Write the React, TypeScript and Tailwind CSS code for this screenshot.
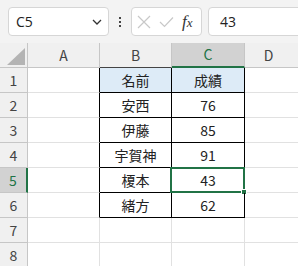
import React from 'react';

const rows = [
  { n: 1, b: '名前', c: '成績', head: true },
  { n: 2, b: '安西', c: '76' },
  { n: 3, b: '伊藤', c: '85' },
  { n: 4, b: '宇賀神', c: '91' },
  { n: 5, b: '榎本', c: '43' },
  { n: 6, b: '緒方', c: '62' },
  { n: 7, b: '', c: '' },
  { n: 8, b: '', c: '' },
];

const cellFont = { fontFamily: '"Noto Sans CJK JP", "Noto Sans", sans-serif' };

export default function App() {
  return (
    <div className="w-[298px] h-[266px] overflow-hidden bg-[#f3f3f3] text-[#222]" style={cellFont}>
      {/* formula bar */}
      <div className="flex items-center h-[43px] pl-[8px] pb-[7px] pt-[7px]">
        <div className="flex items-center justify-between w-[101px] h-[29px] bg-white border border-[#d6d6d6] rounded-[4px] pl-[7px] pr-[6px]">
          <span className="text-[14px] leading-none" style={{ fontFamily: '"Open Sans", "Noto Sans", sans-serif' }}>C5</span>
          <svg width="10" height="6" viewBox="0 0 10 6">
            <path d="M1 1 L5 5 L9 1" fill="none" stroke="#333" strokeWidth="1.3" />
          </svg>
        </div>
        <div className="w-[22px] flex flex-col items-center gap-[2px]">
          <span className="w-[2px] h-[2px] bg-[#444]" />
          <span className="w-[2px] h-[2px] bg-[#444]" />
          <span className="w-[2px] h-[2px] bg-[#444]" />
        </div>
        <div className="flex items-center w-[71px] h-[29px] bg-white border border-[#d6d6d6] rounded-[4px] pl-[5px] gap-[8px]">
          <svg width="14" height="14" viewBox="0 0 14 14">
            <path d="M1 1 L13 13 M13 1 L1 13" stroke="#c8c8c8" strokeWidth="1.2" />
          </svg>
          <svg width="15" height="12" viewBox="0 0 15 12">
            <path d="M1 6 L5.5 10.5 L14 1.5" fill="none" stroke="#c8c8c8" strokeWidth="1.2" />
          </svg>
          <span className="italic text-[16px] leading-none text-[#333]" style={{ fontFamily: '"Liberation Serif", "DejaVu Serif", serif' }}>
            <span className="text-[17px]">f</span><span className="text-[13px]">x</span>
          </span>
        </div>
        <div className="flex items-center flex-1 h-[29px] ml-[6px] -mr-[6px] bg-white border border-[#d6d6d6] rounded-[4px] pl-[11px]">
          <span className="text-[14px] leading-none" style={{ fontFamily: '"Open Sans", "Noto Sans", sans-serif' }}>43</span>
        </div>
      </div>

      {/* sheet */}
      <div className="grid grid-cols-[28px_72px_72px_73px_1fr] auto-rows-[25px] bg-white text-[14px]">
        {/* header row */}
        <div className="bg-[#f0f0f0] border-r border-b border-[#c6c6c6] flex items-end justify-end pr-[2px] pb-[2px]">
          <svg width="18" height="17" viewBox="0 0 18 17">
            <path d="M18 0 L18 17 L0 17 Z" fill="#b4b4b4" />
          </svg>
        </div>
        <div className="bg-[#f0f0f0] border-r border-b border-[#c6c6c6] flex items-center justify-center text-[#444]">A</div>
        <div className="bg-[#f0f0f0] border-r border-b border-r-[#c6c6c6] border-b-[#444] flex items-center justify-center text-[#444]">B</div>
        <div className="bg-[#d2d2d2] border-r border-r-[#c6c6c6] border-b-2 border-b-[#217346] flex items-center justify-center text-[#217346]">C</div>
        <div className="bg-[#f0f0f0] border-b border-[#c6c6c6] flex items-center justify-center text-[#444] pr-[6px]">D</div>

        {rows.map((r) => {
          const inTable = r.n <= 6;
          const sel = r.n === 5;
          return (
            <React.Fragment key={r.n}>
              <div
                className={
                  sel
                    ? 'bg-[#d2d2d2] border-b border-b-[#c6c6c6] border-r-2 border-r-[#217346] flex items-center justify-center text-[#217346]'
                    : 'bg-[#f0f0f0] border-b border-r border-[#c6c6c6] flex items-center justify-center text-[#444]'
                }
              >
                {r.n}
              </div>
              <div
                className={
                  inTable
                    ? 'border-b border-b-[#e1e1e1] border-r border-r-black'
                    : 'border-b border-r border-[#e1e1e1]'
                }
              />
              <div
                className={
                  (inTable ? 'border-b border-r border-black ' : 'border-b border-r border-[#e1e1e1] ') +
                  (r.head ? 'bg-[#ddebf7] ' : '') +
                  'flex items-center justify-center'
                }
              >
                {r.b}
              </div>
              <div
                className={
                  (inTable ? 'border-b border-r border-black ' : 'border-b border-r border-[#e1e1e1] ') +
                  (r.head ? 'bg-[#ddebf7] ' : '') +
                  'relative flex items-center justify-center'
                }
              >
                {r.c}
                {sel && (
                  <div className="absolute -left-[2px] -top-[1px] -right-[1px] -bottom-[1px] border-2 border-[#217346]">
                    <div className="absolute -right-[4px] -bottom-[4px] w-[6px] h-[6px] bg-[#217346] border border-white" />
                  </div>
                )}
              </div>
              <div className="border-b border-[#e1e1e1]" />
            </React.Fragment>
          );
        })}
      </div>
    </div>
  );
}
